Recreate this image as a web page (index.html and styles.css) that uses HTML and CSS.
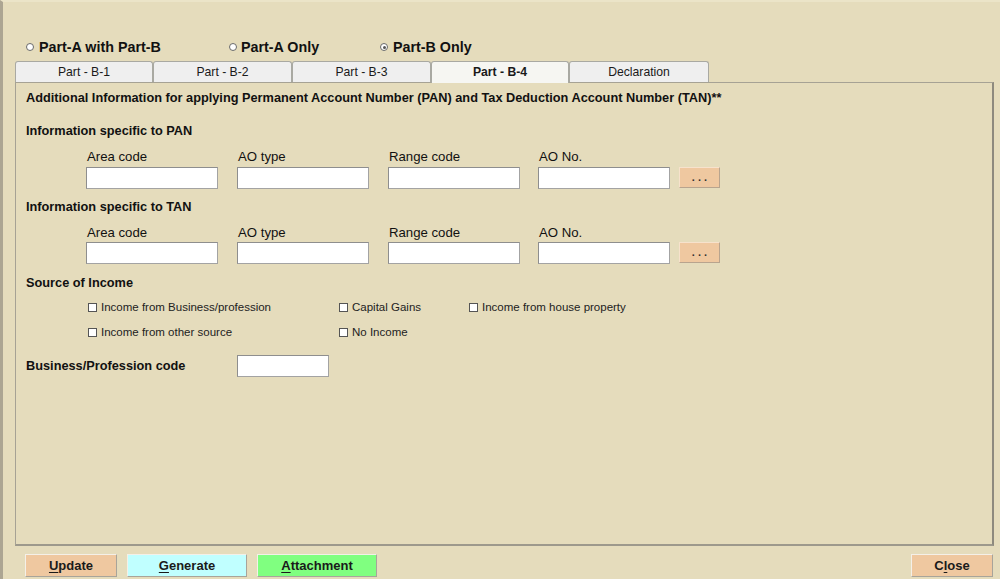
FILE: index.html
```html
<!DOCTYPE html>
<html>
<head>
<meta charset="utf-8">
<link rel="stylesheet" href="styles.css">
</head>
<body>
<div class="app">
  <div class="radios">
    <label class="radio r1"><span class="circ"></span>Part-A with Part-B</label>
    <label class="radio r2"><span class="circ"></span>Part-A Only</label>
    <label class="radio r3"><span class="circ on"></span>Part-B Only</label>
  </div>
  <div class="tabs">
    <div class="tab w138">Part - B-1</div>
    <div class="tab w139">Part - B-2</div>
    <div class="tab w139">Part - B-3</div>
    <div class="tab w138 active">Part - B-4</div>
    <div class="tab w140">Declaration</div>
  </div>
  <div class="panel">
    <div class="title">Additional Information for applying Permanent Account Number (PAN) and Tax Deduction Account Number (TAN)**</div>
    <div class="heading h-pan">Information specific to PAN</div>
    <div class="fields">
      <div class="field"><div class="flabel">Area code</div><div class="input"></div></div>
      <div class="field"><div class="flabel">AO type</div><div class="input"></div></div>
      <div class="field"><div class="flabel">Range code</div><div class="input"></div></div>
      <div class="field"><div class="flabel">AO No.</div><div class="input"></div></div>
      <div class="dots">. . .</div>
    </div>
    <div class="heading h-tan">Information specific to TAN</div>
    <div class="fields f-tan">
      <div class="field"><div class="flabel">Area code</div><div class="input"></div></div>
      <div class="field"><div class="flabel">AO type</div><div class="input"></div></div>
      <div class="field"><div class="flabel">Range code</div><div class="input"></div></div>
      <div class="field"><div class="flabel">AO No.</div><div class="input"></div></div>
      <div class="dots">. . .</div>
    </div>
    <div class="heading h-src">Source of Income</div>
    <div class="checks">
      <label class="chk"><span class="box"></span>Income from Business/profession</label>
      <label class="chk"><span class="box"></span>Capital Gains</label>
      <label class="chk"><span class="box"></span>Income from house property</label>
      <label class="chk"><span class="box"></span>Income from other source</label>
      <label class="chk"><span class="box"></span>No Income</label>
    </div>
    <div class="bizrow">
      <div class="heading bizlabel">Business/Profession code</div>
      <div class="input biz"></div>
    </div>
  </div>
  <div class="buttons">
    <button class="btn update"><u>U</u>pdate</button>
    <button class="btn generate"><u>G</u>enerate</button>
    <button class="btn attach"><u>A</u>ttachment</button>
    <button class="btn close">C<u>l</u>ose</button>
  </div>
</div>
</body>
</html>
```

FILE: styles.css
```css
html, body {
  margin: 0;
  padding: 0;
  background: #e5dcbc;
  font-family: "Liberation Sans", Arial, sans-serif;
  color: #111;
}
.app {
  width: 1000px;
  height: 579px;
  box-sizing: border-box;
  border-left: 3px solid #aca592;
  border-top: 2px solid #ebe4c8;
  padding-left: 12px;
  display: flex;
  flex-direction: column;
  overflow: hidden;
}
.radios {
  display: flex;
  margin-top: 36px;
  height: 18px;
  align-items: center;
  font-size: 14.3px;
  font-weight: bold;
}
.radio {
  display: flex;
  align-items: center;
}
.r1 { margin-left: 11px; width: 203px; }
.r2 { width: 151px; }
.circ {
  width: 6px;
  height: 6px;
  border: 1px solid #6a6a6a;
  border-radius: 50%;
  background: #fff;
  margin-right: 5px;
  position: relative;
}
.r2 .circ { margin-right: 4px; }
.circ.on::after {
  content: "";
  position: absolute;
  left: 1.5px;
  top: 1.5px;
  width: 3px;
  height: 3px;
  border-radius: 50%;
  background: #555;
}
.tabs {
  display: flex;
  margin-top: 5px;
  height: 21px;
  position: relative;
  z-index: 1;
}
.tab {
  box-sizing: border-box;
  height: 21px;
  border: 1px solid #a9a9a2;
  border-bottom: none;
  border-radius: 3px 3px 0 0;
  background: #efefef;
  font-size: 12.2px;
  line-height: 20px;
  text-align: center;
  color: #1a1a1a;
}
.tab.active {
  background: #f6f6f2;
  font-weight: bold;
  height: 22px;
}
.w138 { width: 138px; }
.w139 { width: 139px; }
.w140 { width: 140px; }
.panel {
  box-sizing: border-box;
  width: 979px;
  height: 464px;
  border: 1px solid #a6a294;
  border-right: 2px solid #8e8a7e;
  border-bottom: 2px solid #9d998c;
  padding: 7px 0 0 10px;
}
.title {
  font-size: 12.75px;
  font-weight: bold;
  line-height: 16px;
}
.heading {
  font-size: 12.75px;
  font-weight: bold;
  line-height: 16px;
}
.h-pan { margin-top: 17px; }
.h-tan { margin-top: 10px; }
.h-src { margin-top: 11px; }
.fields {
  display: flex;
  align-items: flex-end;
  margin-top: 10px;
  margin-left: 60px;
}
.field {
  width: 132px;
  margin-right: 19px;
}
.field:nth-child(3) { margin-right: 18px; }
.field:nth-child(4) { margin-right: 9px; }
.flabel {
  font-size: 13.2px;
  line-height: 16px;
  padding-left: 1px;
  margin-bottom: 2px;
}
.f-tan .flabel { margin-bottom: 1px; }
.input {
  box-sizing: border-box;
  height: 22px;
  background: #fff;
  border: 1px solid #a3a3a3;
  border-top-color: #8e8e8e;
  border-left-color: #8e8e8e;
}
.dots {
  box-sizing: border-box;
  width: 41px;
  height: 21px;
  background: #efc8a0;
  border: 1px solid #f7e2cc;
  border-right-color: #b8a48e;
  border-bottom-color: #b8a48e;
  font-size: 11px;
  font-weight: bold;
  text-align: center;
  line-height: 19px;
  color: #333;
  margin-bottom: 1px;
}
.checks {
  display: grid;
  grid-template-columns: 251px 130px auto;
  row-gap: 11px;
  margin-top: 9px;
  margin-left: 62px;
  font-size: 11.5px;
  line-height: 14px;
  color: #222;
}
.chk {
  display: flex;
  align-items: center;
}
.chk:nth-child(4) { grid-column: 1; }
.box {
  width: 7px;
  height: 7px;
  border: 1px solid #555;
  background: #fff;
  margin-right: 4px;
}
.bizrow {
  display: flex;
  align-items: center;
  margin-top: 16px;
}
.bizlabel { width: 211px; }
.input.biz { width: 92px; }
.buttons {
  display: flex;
  margin-top: 8px;
  padding-left: 10px;
  width: 978px;
  box-sizing: border-box;
}
.btn {
  box-sizing: border-box;
  height: 23px;
  font-family: "Liberation Sans", Arial, sans-serif;
  font-size: 13px;
  font-weight: bold;
  color: #1a1a1a;
  padding: 0;
  margin-right: 10px;
  border: 1px solid #f4f0e8;
  border-right-color: #a8a49a;
  border-bottom-color: #a8a49a;
}
.btn u { text-decoration: underline; text-underline-offset: 2px; }
.update { width: 92px; background: #efc8a0; }
.generate { width: 120px; background: #c0ffff; }
.attach { width: 120px; background: #80ff80; }
.close { width: 82px; background: #efc8a0; margin-left: auto; margin-right: 0; }
```
